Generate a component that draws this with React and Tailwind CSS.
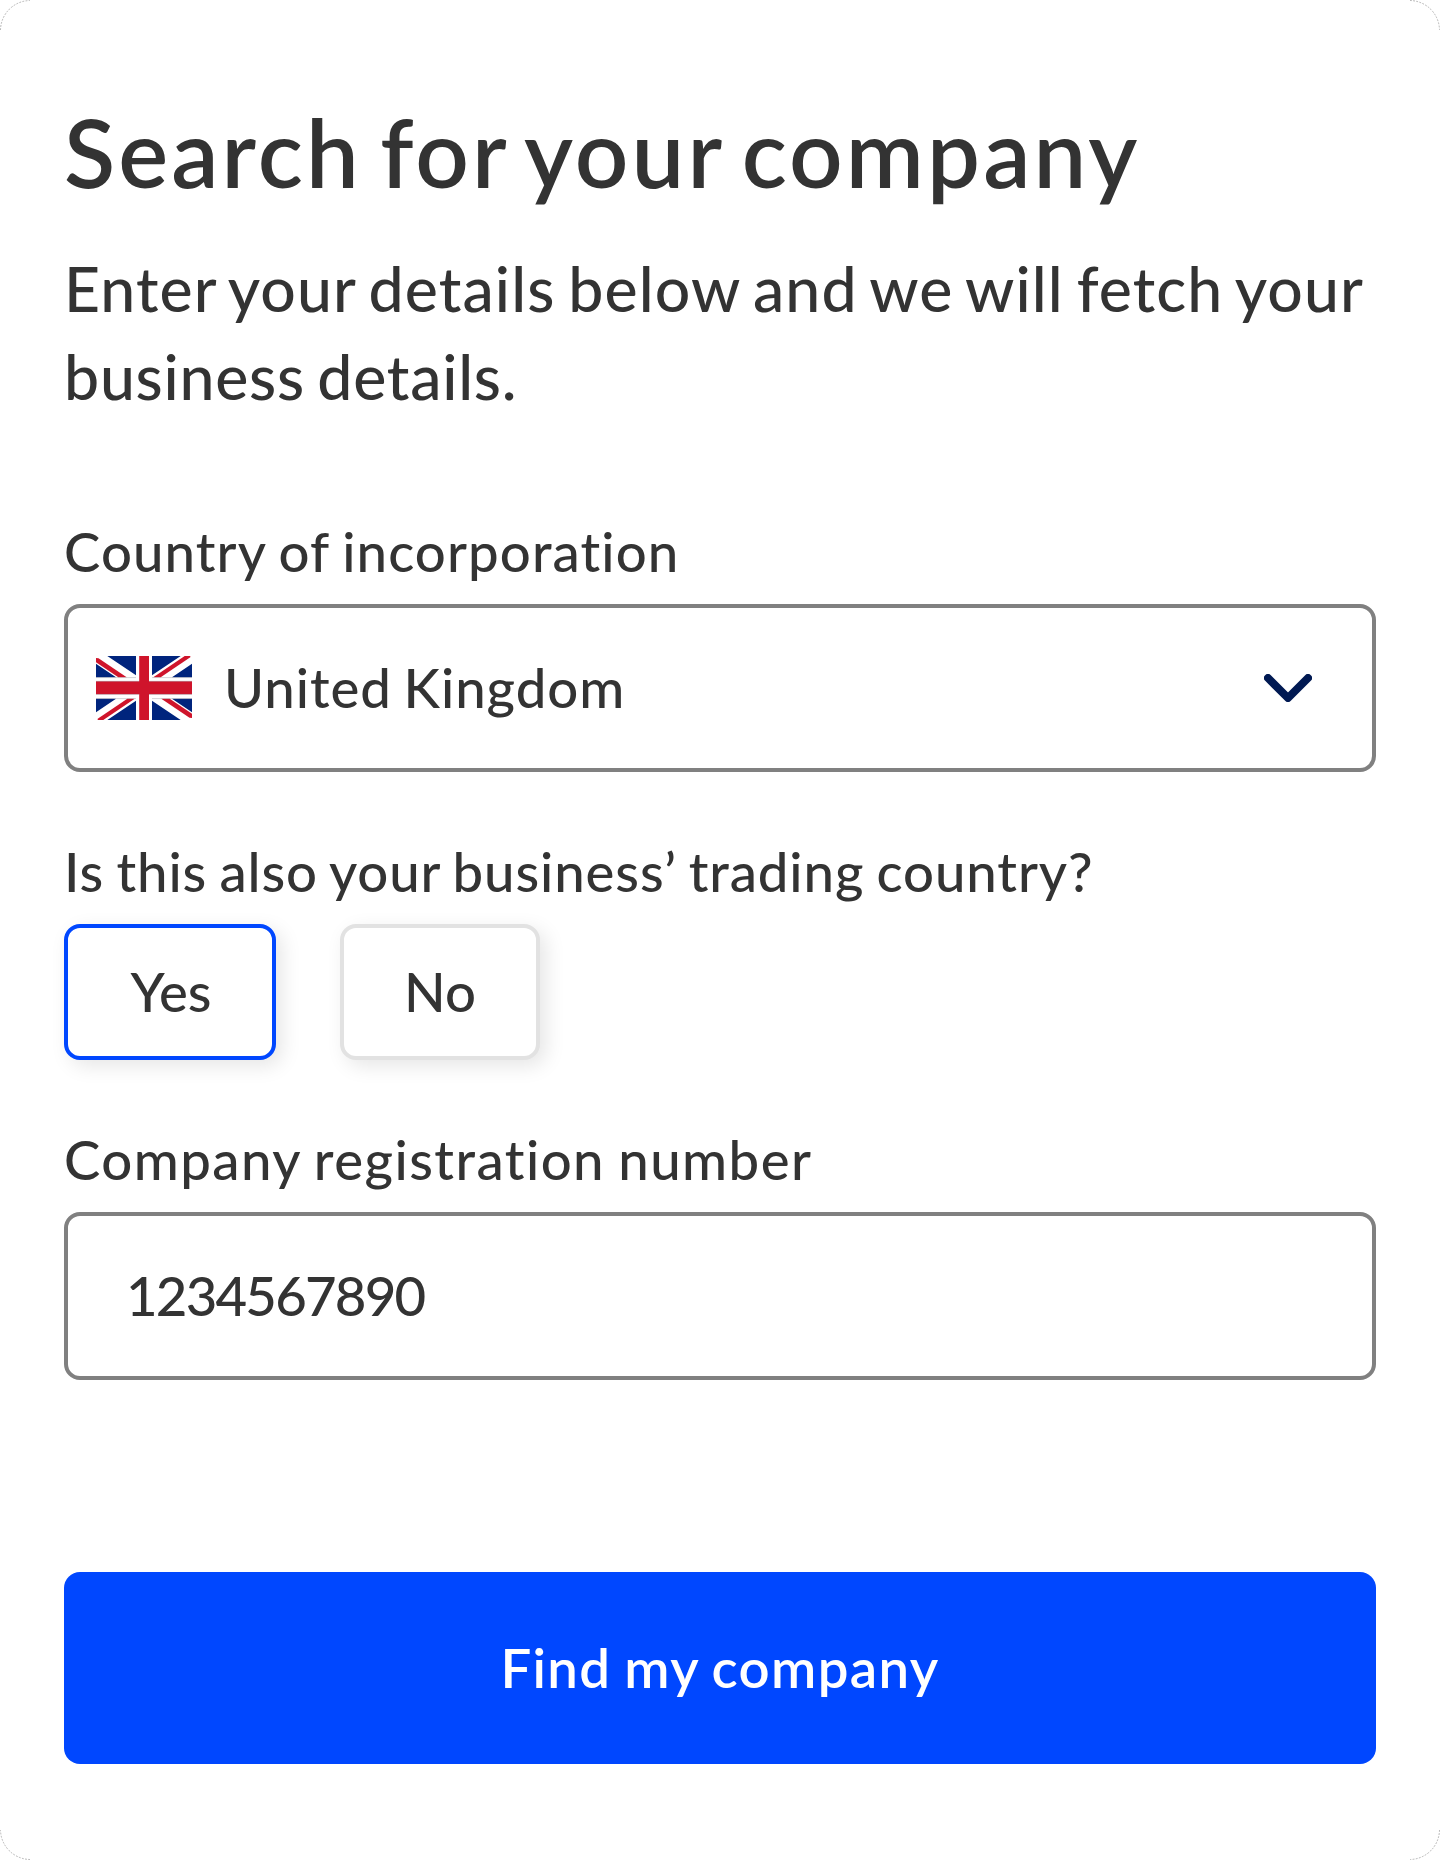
import React from "react";

function UnionJack() {
  return (
    <svg viewBox="0 0 96 64" className="h-16 w-24 shrink-0" aria-hidden="true">
      <rect width="96" height="64" fill="#fff" />
      <g fill="#00247d">
        <path d="M11.3 0H40V19.3ZM0 7.7V21.3H20ZM84.7 0H56V19.3ZM96 7.7V21.3H76Z" />
        <path d="M11.3 64H40V44.7ZM0 56.3V42.7H20ZM84.7 64H56V44.7ZM96 56.3V42.7H76Z" />
      </g>
      <g fill="#cf142b">
        <path d="M0 2L2.5 2.3L30.7 21.3H22.3L0 6.2Z" />
        <path d="M57.3 21.3H64.7L94.3 1.3V0H88.7Z" />
        <path d="M38.7 42.7H31.3L1.7 62.7V64H7.3Z" />
        <path d="M96 62L93.5 61.7L65.3 42.7H73.7L96 57.8Z" />
        <path d="M43.2 0H53V25.3H96V38.2H53V64H43.2V38.2H0V25.3H43.2Z" />
      </g>
      <path
        d="M0 21.6H40M56 21.6H96M0 42.6H40M56 42.6H96M0 25.3H43M53 25.3H96M0 38.4H43M53 38.4H96"
        stroke="#8a8a94"
        strokeOpacity="0.55"
        strokeWidth="0.7"
      />
    </svg>
  );
}

function Chevron() {
  return (
    <svg viewBox="0 0 48 28" className="h-7 w-12 shrink-0" fill="none" aria-hidden="true">
      <path d="M4 4L24 24L44 4" stroke="#001952" strokeWidth="8" strokeLinecap="round" strokeLinejoin="round" />
    </svg>
  );
}

function Corner({ className }) {
  return (
    <svg viewBox="0 0 32 32" className={`absolute size-8 ${className}`} fill="none" aria-hidden="true">
      <path d="M0.5 30A30 30 0 0 1 30 0.5" stroke="#b4b4b4" strokeWidth="1" strokeDasharray="1.8 1.4" />
    </svg>
  );
}

const labelText = "whitespace-nowrap text-[54.5px] leading-[64px]";

export default function App() {
  return (
    <main className="relative flex h-[1860px] w-[1440px] flex-col rounded-[32px] bg-white px-16 pt-[92px] pb-24 font-['Lato',sans-serif] font-medium text-[#333333]">
      <Corner className="top-0 left-0" />
      <Corner className="top-0 right-0 rotate-90" />
      <Corner className="right-0 bottom-0 rotate-180" />
      <Corner className="bottom-0 left-0 -rotate-90" />

      <h1 className="whitespace-nowrap text-[94px] leading-[120px] font-semibold tracking-[3.1px] [word-spacing:-8px]">
        Search for your company
      </h1>
      <p className="mt-8 whitespace-nowrap text-[62.5px] leading-[88px]">
        <span className="block tracking-[1.1px] [word-spacing:-4px]">Enter your details below and we will fetch your</span>
        <span className="block tracking-[0.75px] [word-spacing:-4px]">business details.</span>
      </p>

      <label className={`mt-[99px] tracking-[1.1px] [word-spacing:-2px] ${labelText}`}>Country of incorporation</label>
      <button className="mt-[21px] flex h-[168px] items-center rounded-2xl border-4 border-[#808080] pr-[60px] pl-7 text-left">
        <UnionJack />
        <span className={`ml-8 flex-1 pb-0.5 tracking-[0.95px] [word-spacing:-3px] ${labelText}`}>United Kingdom</span>
        <Chevron />
      </button>

      <span className={`mt-[67px] tracking-[0.9px] [word-spacing:-2.4px] ${labelText}`}>Is this also your business’ trading country?</span>
      <div className="mt-[21px] flex gap-16">
        <button className="flex h-[136px] w-[212px] items-center justify-center rounded-2xl border-4 border-[#0047ff] bg-white pb-0.5 pl-0.5 shadow-[6px_6px_20px_rgba(0,0,0,0.1)]">
          <span className={labelText}>Yes</span>
        </button>
        <button className="flex h-[136px] w-[200px] items-center justify-center rounded-2xl border-4 border-[#e2e2e2] bg-white pb-0.5 shadow-[6px_6px_20px_rgba(0,0,0,0.1)]">
          <span className={labelText}>No</span>
        </button>
      </div>

      <label className={`mt-[67px] tracking-[1.45px] [word-spacing:-2px] ${labelText}`}>Company registration number</label>
      <div className="mt-[21px] flex h-[168px] items-center rounded-2xl border-4 border-[#808080] pb-0.5 pl-[58px]">
        <span className={`tracking-[-1.777px] ${labelText}`}>1234567890</span>
      </div>

      <button className="mt-48 flex h-48 items-center justify-center rounded-2xl bg-[#0047ff] pb-0.5 font-semibold text-white">
        <span className={`tracking-[1.35px] [word-spacing:-2px] ${labelText}`}>Find my company</span>
      </button>
    </main>
  );
}
